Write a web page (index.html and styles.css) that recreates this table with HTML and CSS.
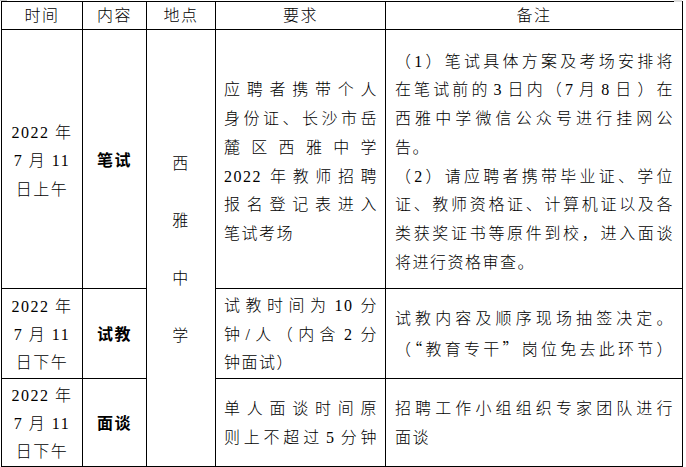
FILE: index.html
```html
<!DOCTYPE html>
<html lang="zh-CN">
<head>
<meta charset="utf-8">
<title>考试安排</title>
<link rel="stylesheet" href="styles.css">
</head>
<body>
<span class="mark mark-left"></span>
<span class="mark mark-right"></span>
<table class="sched">
  <colgroup>
    <col class="w-time">
    <col class="w-item">
    <col class="w-place">
    <col class="w-req">
    <col class="w-note">
  </colgroup>
  <tr class="r-head">
    <th>时间</th>
    <th>内容</th>
    <th>地点</th>
    <th>要求</th>
    <th>备注</th>
  </tr>
  <tr class="r-1">
    <td class="c-time">2022 年<br>7 月 11<br>日上午</td>
    <td class="c-item">笔试</td>
    <td class="c-place" rowspan="3"><div class="place">西<br>雅<br>中<br>学</div></td>
    <td class="c-req">
      <div class="j">应聘者携带个人</div>
      <div class="j">身份证、长沙市岳</div>
      <div class="j">麓区西雅中学</div>
      <div class="j"><span class="num n-start">2022</span>年教师招聘</div>
      <div class="j">报名登记表进入</div>
      <div>笔试考场</div>
    </td>
    <td class="c-note">
      <div class="j">（1）笔试具体方案及考场安排将</div>
      <div class="j">在笔试前的<span class="num">3</span>日内（7<span class="num n-end">月</span>8<span class="num n-end">日</span>）在</div>
      <div class="j">西雅中学微信公众号进行挂网公</div>
      <div>告。</div>
      <div class="j">（2）请应聘者携带毕业证、学位</div>
      <div class="j">证、教师资格证、计算机证以及各</div>
      <div class="j">类获奖证书等原件到校，进入面谈</div>
      <div>将进行资格审查。</div>
    </td>
  </tr>
  <tr class="r-2">
    <td class="c-time">2022 年<br>7 月 11<br>日下午</td>
    <td class="c-item">试教</td>
    <td class="c-req">
      <div class="j">试教时间为<span class="num">10</span>分</div>
      <div class="j">钟/人（内含<span class="num">2</span>分</div>
      <div>钟面试）</div>
    </td>
    <td class="c-note">
      <div class="j">试教内容及顺序现场抽签决定。</div>
      <div class="j">（<span class="cjk">“</span>教育专干<span class="cjk">”</span>岗位免去此环节）</div>
    </td>
  </tr>
  <tr class="r-3">
    <td class="c-time">2022 年<br>7 月 11<br>日下午</td>
    <td class="c-item">面谈</td>
    <td class="c-req">
      <div class="j">单人面谈时间原</div>
      <div class="j">则上不超过<span class="num">5</span>分钟</div>
    </td>
    <td class="c-note">
      <div class="j">招聘工作小组组织专家团队进行</div>
      <div>面谈</div>
    </td>
  </tr>
</table>
</body>
</html>
```
FILE: styles.css
```css
html, body {
  margin: 0;
  padding: 0;
  background: #fff;
}

body {
  position: relative;
  width: 686px;
  height: 467px;
  overflow: hidden;
  font-family: "Liberation Serif", "Noto Sans CJK SC", serif;
  font-size: 16px;
  font-weight: 300;
  color: #000;
  letter-spacing: 1.5px;
}

.cjk {
  font-family: "Noto Sans CJK SC", sans-serif;
}

.num {
  margin: 0 3px;
}
.num.n-start {
  margin-left: 0;
}
.num.n-end {
  margin: 0 3px 0 3px;
}

.mark {
  position: absolute;
  top: 0;
  background: #c8c8c8;
}
.mark-left {
  left: 0;
  width: 7px;
  height: 1px;
}
.mark-right {
  left: 674px;
  width: 8px;
  height: 2px;
  background: #dedede;
}

.sched {
  margin: 1px 0 0 1px;
  border-collapse: collapse;
  table-layout: fixed;
  width: 681px;
}

.w-time { width: 81px; }
.w-item { width: 64px; }
.w-place { width: 69px; }
.w-req { width: 170px; }
.w-note { width: 297px; }

.sched th,
.sched td {
  border: 1px solid #000;
  padding: 0;
  line-height: 28.7px;
  vertical-align: middle;
  text-align: center;
  font-weight: 300;
}

.sched th {
  line-height: 26px;
  padding-top: 1px;
}

.r-head { height: 28px; }
.r-1 { height: 259px; }
.r-2 { height: 87px; }
.r-3 { height: 87px; }

.sched td.c-item {
  font-weight: 700;
}

.sched td.c-time {
  line-height: 28.5px;
  padding-top: 3px;
}

.sched td.c-item {
  padding-top: 3px;
}

.place {
  line-height: 57.4px;
  padding-top: 3px;
}

.sched td.c-req {
  text-align: left;
  padding: 3px 7px 0 8px;
}

.sched td.c-note {
  text-align: left;
  padding: 3px 8px 0 9px;
}

.r-1 td.c-req,
.r-1 td.c-note {
  padding-top: 7px;
}

.r-1 td.c-time,
.r-1 td.c-item {
  padding-top: 5px;
}

.r-2 td.c-time,
.r-3 td.c-time {
  line-height: 28px;
  padding-top: 3px;
}

.j {
  text-align: justify;
  text-align-last: justify;
}
```
